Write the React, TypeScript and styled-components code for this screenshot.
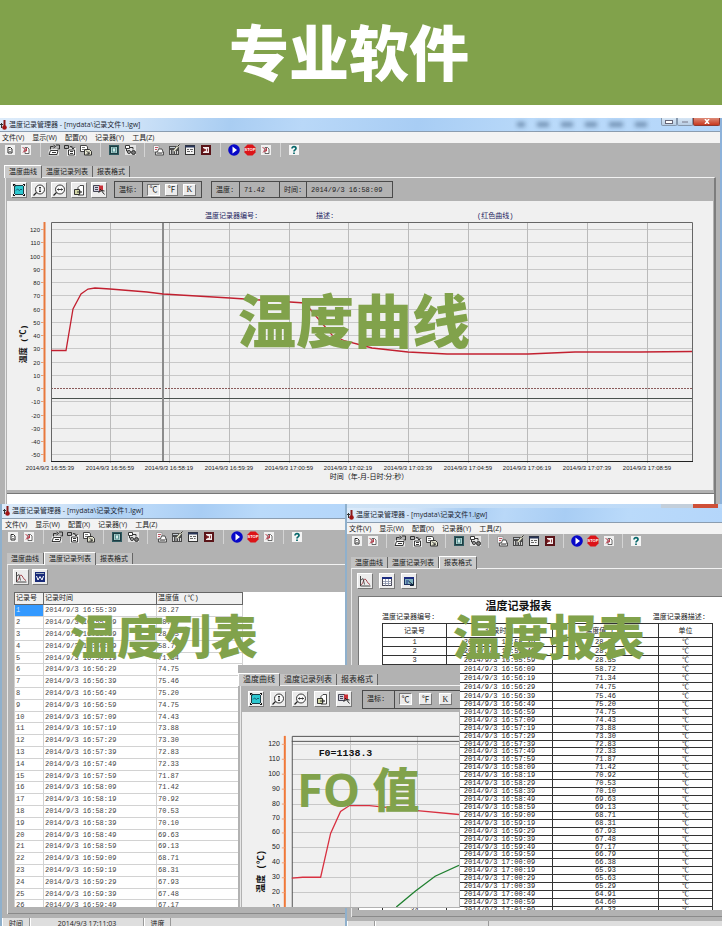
import React from "react";
import styled, { createGlobalStyle, css } from "styled-components";

const GREEN = "#81a24b";
const GREY = "#b2b2b2";
const SANS = `"Open Sans", "Noto Sans CJK SC", sans-serif`;
const SONG = `"Liberation Mono", "Noto Sans CJK SC", monospace`;

const GlobalStyle = createGlobalStyle`
  *, *::before, *::after { box-sizing: border-box; }
  body { margin: 0; background: #fff; color: #222; font-family: ${SANS}; font-size: 7px; line-height: 10px; }
  button { font: inherit; color: inherit; border: 0; padding: 0; margin: 0; background: none; }
  svg { display: block; }
`;

/* ---------- data ---------- */

const VALUES = [
  "28.27", "28.30", "28.35", "58.72", "71.34", "74.75", "75.46", "75.20", "74.75", "74.43", "73.88", "73.30",
  "72.83", "72.33", "71.87", "71.42", "70.92", "70.53", "70.10", "69.63", "69.13", "68.71", "68.31", "67.93",
  "67.48", "67.17", "66.79", "66.38", "65.93", "65.63", "65.29", "64.91", "64.60", "64.23",
];

const two = (n: number) => String(n).padStart(2, "0");

const RECORDS = VALUES.map((value, i) => {
  const s = 16 * 3600 + 55 * 60 + 39 + i * 10;
  return {
    id: i + 1,
    time: `2014/9/3 ${two(Math.floor(s / 3600))}:${two(Math.floor(s / 60) % 60)}:${two(s % 60)}`,
    value,
  };
});

const MENUS = ["文件(V)", "显示(W)", "配置(X)", "记录器(Y)", "工具(Z)"];
const TABS = ["温度曲线", "温度记录列表", "报表格式"];

/* ---------- page ---------- */

const Page = styled.main`
  overflow: hidden;
`;

const Banner = styled.header`
  display: flex;
  justify-content: center;
  align-items: center;
  height: 105px;
  padding-right: 24px;
  padding-bottom: 6px;
  margin-bottom: 13px;
  background: ${GREEN};
`;

const BannerTitle = styled.h1`
  margin: 0;
  color: #fff;
  font: 900 60px/60px "Noto Sans CJK SC", sans-serif;
`;

const Lower = styled.div`
  position: relative;
  display: grid;
  grid-template-columns: 345fr 377fr;
`;

const Caption = styled.h2<{ $x: number; $y: number; $size: number }>`
  position: absolute;
  left: ${(p) => p.$x}px;
  top: ${(p) => p.$y}px;
  margin: 0;
  color: ${GREEN};
  font: 900 ${(p) => p.$size}px/1 "Noto Sans CJK SC", sans-serif;
  white-space: nowrap;
  pointer-events: none;
`;

const CaptionLatin = styled.span`
  font-family: "Open Sans", sans-serif;
  font-weight: 700;
`;

/* ---------- window frame ---------- */

const Frame = styled.section<{ $edge: "left" | "right" }>`
  position: relative;
  display: flex;
  flex-direction: column;
  min-width: 0;
  background: ${GREY};
  ${(p) => (p.$edge === "left" ? "border-left: 2px solid #8fb0cc;" : "border-right: 2px solid #8db2da;")}
`;

const TitleBar = styled.div<{ $height: number; $indent: number }>`
  display: flex;
  align-items: center;
  gap: 2px;
  height: ${(p) => p.$height}px;
  padding-left: ${(p) => p.$indent}px;
  border-bottom: 1px solid #8b9db0;
  background: linear-gradient(100deg, #dcebfa 0, #cfe3f8 18%, #a9cdf2 32%, #b9d8f8 42%, #a8cdf4 58%, #badafa 75%, #b4d6fa 100%);
  color: #1c2733;
  white-space: nowrap;
`;

const UnderlyingStrip = styled.div`
  display: flex;
  justify-content: flex-end;
  height: 4px;
  padding-right: 4px;
  background: linear-gradient(90deg, #cfe3f6, #b9d8f8);
  &::before { content: ""; width: 32px; background: #c3cfdb; }
  &::after { content: ""; width: 25px; background: #cf5038; }
`;

const GhostMenu = styled.div`
  display: flex;
  gap: 12px;
  margin-left: auto;
  margin-right: 12px;
  filter: blur(2px);
`;

const Ghost = styled.i<{ $w: number }>`
  width: ${(p) => p.$w}px;
  height: 5px;
  background: #5f7d9f;
  opacity: 0.75;
`;

const WindowButtons = styled.div`
  display: flex;
  align-self: flex-start;
  height: 8px;
`;

const WindowButton = styled.button<{ $close?: boolean }>`
  display: grid;
  place-items: center;
  width: ${(p) => (p.$close ? 27 : 16)}px;
  border: 1px solid ${(p) => (p.$close ? "#8d3a30" : "#8698ad")};
  border-top: 0;
  border-radius: 0 0 2px 2px;
  background: ${(p) => (p.$close ? "linear-gradient(#dd8a78, #c8391f)" : "linear-gradient(#d7e6f5, #b9cee4)")};
`;

const MenuBar = styled.nav<{ $indent: number }>`
  display: flex;
  align-items: center;
  gap: 8px;
  height: 11px;
  padding-left: ${(p) => p.$indent}px;
  background: #f3f3f3;
  white-space: nowrap;
`;

const IconBar = styled.div<{ $indent: number }>`
  display: flex;
  align-items: center;
  height: 14px;
  padding-left: ${(p) => p.$indent}px;
`;

const IconGroup = styled.div`
  display: flex;
  gap: 4px;
`;

const Divider = styled.span<{ $w: number }>`
  display: flex;
  justify-content: center;
  flex: none;
  width: ${(p) => p.$w}px;
  height: 14px;
  &::before { content: ""; width: 1px; background: #d4d4d4; }
`;

const IconButton = styled.button`
  display: grid;
  place-items: center;
  flex: none;
  width: 12px;
  height: 12px;
`;

const TabRow = styled.div<{ $indent: number; $large?: boolean }>`
  display: flex;
  align-items: flex-end;
  height: 12px;
  margin-top: 8px;
  padding-left: ${(p) => p.$indent}px;
  font-family: ${SONG};
  font-size: ${(p) => (p.$large ? 8 : 7)}px;
`;

const Tab = styled.button<{ $active: boolean }>`
  height: 11px;
  padding: 0 4px;
  border-right: 1px solid #666;
  background: #c2c2c2;
  white-space: nowrap;
  ${(p) =>
    p.$active &&
    css`
      height: 13px;
      margin-bottom: -1px;
      border-top: 1px solid #fff;
      border-left: 1px solid #fff;
      background: #cacaca;
      z-index: 1;
    `}
`;

const Panel = styled.div<{ $left: number; $right: number }>`
  display: flex;
  flex-direction: column;
  flex: 1;
  min-width: 0;
  margin-left: ${(p) => p.$left}px;
  margin-right: ${(p) => p.$right}px;
  border-top: 1px solid #f2f2f2;
  border-left: 1px solid #e8e8e8;
  ${(p) => p.$right > 0 && "border-right: 2px solid #7d7d7d;"}
`;

const Tools = styled.div<{ $gap: number; $indent: number; $height: number }>`
  display: flex;
  align-items: center;
  gap: ${(p) => p.$gap}px;
  height: ${(p) => p.$height}px;
  padding-left: ${(p) => p.$indent}px;
  font-family: ${SONG};
  white-space: nowrap;
`;

const ToolButton = styled.button`
  display: grid;
  place-items: center;
  flex: none;
  width: 16px;
  height: 16px;
  border: 1px solid #fff;
  border-right-color: #777;
  border-bottom-color: #777;
  background: #ececec;
`;

const Readout = styled.div<{ $ml: number; $large?: boolean }>`
  display: flex;
  flex: none;
  height: ${(p) => (p.$large ? 19 : 17)}px;
  margin-left: ${(p) => p.$ml}px;
  border: 1px solid #4a4a4a;
`;

const Cell = styled.div<{ $w: number; $gap?: number }>`
  display: flex;
  align-items: center;
  gap: ${(p) => p.$gap ?? 5}px;
  width: ${(p) => p.$w}px;
  padding-left: 4px;
  & + & { border-left: 1px solid #4a4a4a; }
`;

const UnitButton = styled.button<{ $on?: boolean }>`
  flex: none;
  width: 13px;
  height: 12px;
  border: 1px solid ${(p) => (p.$on ? "#777" : "#fff")};
  border-right-color: ${(p) => (p.$on ? "#fff" : "#777")};
  border-bottom-color: ${(p) => (p.$on ? "#fff" : "#777")};
  background: #ececec;
  font-family: "Liberation Serif", "Noto Sans CJK SC", serif;
  font-size: 8px;
  line-height: 9px;
`;

/* ---------- content areas ---------- */

const ChartArea = styled.div`
  margin: 0 1px;
  background: #f0f0f0;
`;

const ChartSvg = styled.svg`
  width: 100%;
  height: auto;
`;

const BlankStrip = styled.div`
  height: 11px;
  margin: 3px 0 0 1px;
  border-top: 1px solid #777;
  background: #fff;
`;

const ListArea = styled.div`
  height: 315px;
  margin: 4px 0 0 6px;
  overflow: hidden;
  background: #fff;
`;

const ListTable = styled.table`
  width: 228px;
  border-collapse: collapse;
  table-layout: fixed;
  font-family: ${SONG};
  line-height: 9px;
  color: #444;
  th, td { padding: 0 1px; text-align: left; font-weight: 400; white-space: nowrap; }
  th { height: 12px; background: #f0f0f0; border: 1px solid #666; color: #222; }
  td { height: 12px; border: 1px solid #d2d2d2; }
  tr:nth-child(5n) td { height: 11px; }
  tbody tr:first-child td:first-child { background: #3399ff; color: #cfe6ff; }
`;

const PanelFoot = styled.div`
  height: 7px;
  border-bottom: 1px solid #8a8a8a;
`;

const StatusBar = styled.footer<{ $height: number }>`
  display: flex;
  height: ${(p) => p.$height}px;
  margin-top: 4px;
  overflow: hidden;
  background: #dedede;
  line-height: 12px;
`;

const StatusCell = styled.div<{ $w: number }>`
  flex: none;
  width: ${(p) => p.$w}px;
  border-left: 1px solid #fff;
  border-right: 1px solid #999;
  text-align: center;
`;

const Paper = styled.div`
  height: 314px;
  margin: 4px 0 0 6px;
  padding: 2px 11px 0 23px;
  overflow: hidden;
  border-top: 1px solid #777;
  border-left: 1px solid #777;
  background: #fff;
  font-family: ${SONG};
`;

const ReportTitle = styled.h3`
  margin: 0 56px 1px 0;
  font: 700 11px/12px "Noto Sans CJK SC", sans-serif;
  color: #111;
  text-align: center;
`;

const ReportMeta = styled.div`
  display: flex;
  justify-content: space-between;
  padding-right: 5px;
  line-height: 11px;
`;

const ReportTable = styled.table`
  width: 100%;
  border-collapse: collapse;
  table-layout: fixed;
  color: #222;
  th, td { padding: 0; font-weight: 400; text-align: center; border: 1px solid #333; white-space: nowrap; overflow: hidden; }
  th { height: 14px; line-height: 12px; }
  td { height: 8px; line-height: 7px; }
  tr:nth-child(-n + 7) td { height: 9px; line-height: 8px; }
  tr:nth-child(13n) td { height: 7px; line-height: 6px; }
`;

const FoWindow = styled.section`
  position: absolute;
  left: 238px;
  top: 161px;
  width: 222px;
  height: 243px;
  overflow: hidden;
  background: ${GREY};
`;

const FoPanel = styled.div`
  margin-left: 2px;
  border-top: 1px solid #f2f2f2;
  border-left: 1px solid #e8e8e8;
`;

/* ---------- icons ---------- */

const icons: Record<string, React.ReactNode> = {
  page: (
    <>
      <rect x="1" y="1" width="10" height="10" fill="#f0f0f0" />
      <path d="M4 3.500h2.500l1.500 1.500v4h-4z" fill="#fff" stroke="#2a2a2a" />
      <path d="M5 5.500h1.500M5 7.500h2" stroke="#555" strokeWidth=".7" />
    </>
  ),
  pageRed: (
    <>
      <rect x="1" y="1" width="10" height="10" fill="#f0f0f0" />
      <path d="M5 3.500h2.500l1.500 1.500v4.500h-4z" fill="#fff" stroke="#444" strokeWidth=".8" />
      <path d="M2.500 3l3.500 3.500M6.500 4v3h-3M3 8.500l2-2" stroke="#b82838" strokeWidth=".9" fill="none" />
    </>
  ),
  open: (
    <>
      <path d="M1.500 5h9.500v6.500h-10.500v-4z" fill="#e8e8e8" />
      <path d="M1 10.500l1.500-4h7.500l-1 4zM4 8.500h4" fill="#fff" stroke="#222" strokeWidth=".9" />
      <path d="M2.500 5.500v-3h3M5.500 1l2 1.500-2 1.500M8 1h3.500v4h-2" stroke="#222" strokeWidth=".9" fill="none" />
    </>
  ),
  save: (
    <>
      <rect x="3" y="4" width="9" height="8" fill="#e8e8e8" />
      <path d="M4.500 11v-5h6v5zM6 7.500h3M6 9.500h3" fill="#fff" stroke="#222" strokeWidth=".9" />
      <path d="M.500 1.500h4v3h-4zM6 2.500c2 0 3 0 3 2M7.500 3.500l1.500 1.500 1.500-1.500" stroke="#222" strokeWidth=".9" fill="none" />
    </>
  ),
  copy: (
    <>
      <path d="M.500 1.500h6l1 1.500v4.500h-7z" fill="#fff" stroke="#333" strokeWidth=".9" />
      <path d="M2 3.500h3M2 5.500h2" stroke="#555" strokeWidth=".8" />
      <path d="M4.500 5.500h5l2 2v3.500h-7z" fill="#e9e9d4" stroke="#222" strokeWidth=".9" />
      <path d="M6 6.500l3.500 3.500M9 7.500v2.500h-2.500" stroke="#222" strokeWidth=".9" fill="none" />
    </>
  ),
  chip: (
    <>
      <rect x="1" y="1" width="10" height="10" fill="#2f5a60" />
      <rect x="2.500" y="2.500" width="7" height="7" fill="#a8d0cc" stroke="#1c3c42" />
      <rect x="4.500" y="4" width="3" height="4" fill="#d4ecea" stroke="#4b8488" strokeWidth=".8" />
    </>
  ),
  nodes: (
    <>
      <rect x="1" y="1" width="11" height="10" fill="#e4e4e4" />
      <path d="M1.500 1.500h4v3h-4z" fill="#fff" stroke="#222" strokeWidth=".9" />
      <path d="M6 3.500h3v2M2.500 5v2h2" stroke="#222" strokeWidth=".9" fill="none" />
      <circle cx="5" cy="8" r="1.500" fill="#bbb" stroke="#222" strokeWidth=".9" />
      <circle cx="9.500" cy="8.500" r="2" fill="#777" stroke="#222" strokeWidth=".9" />
    </>
  ),
  printDoc: (
    <>
      <path d="M1.500 1.500h5.500v6.500h-5.500z" fill="#f4f4f4" stroke="#999" strokeWidth=".9" />
      <path d="M3 3.500h3M3 5.500h2" stroke="#b84050" strokeWidth=".9" />
      <path d="M3.500 11v-3h8v3z" fill="#e0e0e0" stroke="#444" strokeWidth=".9" />
      <path d="M5.500 8l1-3h3.500l1 3" fill="#fff" stroke="#444" strokeWidth=".9" />
      <path d="M5 9.500h5" stroke="#666" strokeWidth=".7" />
    </>
  ),
  setup: (
    <>
      <rect x="1" y="2" width="10" height="9" fill="#4a4a4a" />
      <path d="M2.500 6v4M5 6v4M7.500 7v3M9.500 7v3" stroke="#d4d4d4" />
      <path d="M2 3.500h5" stroke="#c4ccd4" />
      <path d="M11 1l-5 6" stroke="#e8e8d0" strokeWidth="1.500" />
      <path d="M11.500 .500l-2 2" stroke="#222" />
    </>
  ),
  form: (
    <>
      <rect x="1.500" y="1.500" width="9" height="9" fill="#f4f4f4" stroke="#333" />
      <path d="M1 2.500h10" stroke="#2a3658" strokeWidth="2" />
      <path d="M3 5.500h2M6 5.500h3M3 7.500h3M7 7.500h1.500" stroke="#555" strokeWidth=".9" />
    </>
  ),
  record: (
    <>
      <rect x="1" y="1" width="10" height="10" fill="#5a1418" />
      <rect x="3" y="3" width="6" height="6" fill="#f4eaea" />
      <path d="M3 4.500l3 1.500-3 1.500zM7.500 4.500v3" stroke="#7a181c" fill="#7a181c" strokeWidth=".8" />
    </>
  ),
  play: (
    <>
      <circle cx="6" cy="6" r="5.800" fill="#0808c8" />
      <path d="M4.500 2.500l4.500 3.500-4.500 3.500z" fill="#fff" />
    </>
  ),
  stop: (
    <>
      <path d="M3.500 .500h5l3 3v5l-3 3h-5l-3-3v-5z" fill="#dc1418" />
      <text x="6" y="7" fontSize="4" fontWeight="700" fill="#fff" textAnchor="middle" fontFamily="Liberation Sans, sans-serif">
        STOP
      </text>
    </>
  ),
  help: (
    <>
      <rect width="10" height="10" x="1" y="1" fill="#f4f4f4" />
      <path d="M4 4.500c0-2.500 4-2.500 4 0 0 1.500-2 1.200-2 3M6 8.500v1.500" fill="none" stroke="#06676a" strokeWidth="1.700" />
    </>
  ),
  fit: (
    <>
      <rect x="2" y="2" width="8" height="8" fill="#2cc8d0" />
      <path d="M2 1.500h8M2 10.500h8M1.500 2v8M10.500 2v8" stroke="#1a4048" />
      <path d="M0 .500h2v2M12 .500h-2M0 11.500h2M12 11.500h-2M.500 0v2M11.500 0v2M.500 10v2M11.500 10v2" stroke="#111" fill="none" />
      <path d="M3 6.500l1.500-1.500 2 1.500 1.500-1.500 1 1" fill="none" stroke="#15506a" strokeWidth=".9" />
    </>
  ),
  zoomY: (
    <>
      <circle cx="7" cy="5.500" r="4.500" fill="#fafafa" stroke="#222" strokeWidth=".9" />
      <path d="M3.500 8.500l-3 3" stroke="#222" strokeWidth="1.300" />
      <path d="M7 3v5M6 4l1-1 1 1M6 7l1 1 1-1" fill="none" stroke="#222" strokeWidth=".9" />
    </>
  ),
  zoomX: (
    <>
      <circle cx="7" cy="5.500" r="4.500" fill="#fafafa" stroke="#222" strokeWidth=".9" />
      <path d="M3.500 8.500l-3 3" stroke="#222" strokeWidth="1.300" />
      <path d="M4.500 5.500h5M5.500 4.500l-1 1 1 1M8.500 4.500l1 1-1 1" fill="none" stroke="#222" strokeWidth=".9" />
    </>
  ),
  paste: (
    <>
      <path d="M5 3.500l2-2h3.500v9.500h-5.500z" fill="#fff" stroke="#333" strokeWidth=".9" />
      <path d="M1.500 5.500h5v5h-5z" fill="#d4d8a8" stroke="#222" strokeWidth=".9" />
      <path d="M4 8h4.500M7 6.500l1.500 1.500-1.500 1.500" fill="none" stroke="#222" strokeWidth=".9" />
    </>
  ),
  annotate: (
    <>
      <path d="M.500 1.500h6v6h-6z" fill="#cfd0dc" stroke="#334" strokeWidth=".9" />
      <path d="M2 3.500h3M2 5.500h3" stroke="#334" strokeWidth=".9" />
      <path d="M6 1.500h4v5h-4z" fill="#c83038" />
      <path d="M7 5l4.500 5.500M5.500 8.500l3-2 3 .500" fill="none" stroke="#222" />
    </>
  ),
  curve: (
    <>
      <path d="M1.500 1v10h10" fill="none" stroke="#333" strokeWidth=".9" />
      <path d="M2 10c2-1 2.500-6 4-6s2.500 5 5 5.500" fill="none" stroke="#98303a" strokeWidth=".9" />
      <path d="M2 5l2-1.500 1.500 6" stroke="#333" strokeWidth=".8" fill="none" />
    </>
  ),
  word: (
    <>
      <rect x="1" y="1" width="10" height="10" fill="#182a78" />
      <path d="M2.500 5l1.500 4 2-3.500 2 3.500 1.500-4" fill="none" stroke="#fff" />
      <path d="M2 2.500h8" stroke="#9ab" />
    </>
  ),
  grid: (
    <>
      <rect x="1.500" y="2.500" width="9" height="8" fill="#fff" stroke="#334" strokeWidth=".9" />
      <path d="M1 3h10" stroke="#1b2c80" strokeWidth="2" />
      <path d="M4.500 4v6.500M7.500 4v6.500M2 6.500h8.500M2 8.500h8.500" stroke="#8890a8" strokeWidth=".8" />
    </>
  ),
  export: (
    <>
      <rect x="1.500" y="2.500" width="9" height="7" fill="#7fb0bc" stroke="#1c2f60" />
      <path d="M1 3h10" stroke="#1b2c80" strokeWidth="2" />
      <path d="M3 6h3M3 8h2" stroke="#1b2c80" />
      <path d="M6 6.500l4 3.500M10.500 7v3.500h-3.500" fill="none" stroke="#123" />
    </>
  ),
};

const Icon = ({ name }: { name: string }) => (
  <svg width="12" height="12" viewBox="0 0 12 12" aria-hidden="true">
    {icons[name]}
  </svg>
);

const AppIcon = () => (
  <svg width="7" height="10" viewBox="0 0 7 10" aria-hidden="true">
    <path d="M0 4.500h3M1.500 3v5" stroke="#333" />
    <path d="M4.500 0v6" stroke="#8a1818" strokeWidth="2" />
    <circle cx="4.500" cy="7.500" r="2.300" fill="#a01414" />
  </svg>
);

/* ---------- composed parts ---------- */

const ICON_GROUPS = [
  ["page", "pageRed"],
  ["open", "save", "copy"],
  ["chip", "nodes"],
  ["printDoc", "setup", "form", "record"],
  ["play", "stop", "pageRed"],
  ["help"],
];

type ChromeProps = { titleHeight: number; indent: number; divider: number; children?: React.ReactNode };

const WindowChrome = ({ titleHeight, indent, divider, children }: ChromeProps) => (
  <>
    <TitleBar $height={titleHeight} $indent={indent - 3}>
      <AppIcon />
      <span>温度记录管理器 - [mydata\记录文件1.lgw]</span>
      {children}
    </TitleBar>
    <MenuBar $indent={indent - 1}>
      {MENUS.map((m) => (
        <button key={m}>{m}</button>
      ))}
    </MenuBar>
    <IconBar $indent={indent + 1}>
      {ICON_GROUPS.map((group, g) => (
        <React.Fragment key={g}>
          {g > 0 && <Divider $w={divider} />}
          <IconGroup>
            {group.map((name) => (
              <IconButton key={name} aria-label={name}>
                <Icon name={name} />
              </IconButton>
            ))}
          </IconGroup>
        </React.Fragment>
      ))}
    </IconBar>
  </>
);

const Tabs = ({ active, indent, large }: { active: number; indent: number; large?: boolean }) => (
  <TabRow $indent={indent} $large={large} role="tablist">
    {TABS.map((t, i) => (
      <Tab key={t} role="tab" aria-selected={i === active} $active={i === active}>
        {t}
      </Tab>
    ))}
  </TabRow>
);

const ToolButtons = ({ names }: { names: string[] }) => (
  <>
    {names.map((n) => (
      <ToolButton key={n} aria-label={n}>
        <Icon name={n} />
      </ToolButton>
    ))}
  </>
);

const UnitBox = ({ ml, large }: { ml: number; large?: boolean }) => (
  <Readout $ml={ml} $large={large}>
    <Cell $w={large ? 31 : 27}>温标:</Cell>
    <Cell $w={large ? 72 : 59} $gap={large ? 7 : 5}>
      <UnitButton $on>℃</UnitButton>
      <UnitButton>℉</UnitButton>
      <UnitButton>K</UnitButton>
    </Cell>
  </Readout>
);

const CHART_TOOLS = ["fit", "zoomY", "zoomX", "paste", "annotate"];
const AXIS_FONT = "Liberation Sans, sans-serif";
const CJK_FONT = "Liberation Mono, Noto Sans CJK SC, sans-serif";

const TIMES = [
  "16:55:39", "16:56:59", "16:58:19", "16:59:39", "17:00:59", "17:02:19",
  "17:03:39", "17:04:59", "17:06:19", "17:07:39", "17:08:59",
];

const CurveChart = () => {
  const y = (v: number) => Math.round(187 - v * 1.325);
  const x = (i: number) => Math.round(44 + i * 59.65);
  const ticks = Array.from({ length: 18 }, (_, i) => 120 - i * 10);
  return (
    <ChartSvg viewBox="0 0 706 289" role="img" aria-label="温度曲线">
      <g fontFamily={CJK_FONT} fontSize="7" fill="#1c1c60">
        <text x="198" y="17">温度记录器编号:</text>
        <text x="309" y="17">描述:</text>
        <text x="470" y="17">(红色曲线)</text>
      </g>
      <g shapeRendering="crispEdges" stroke="#c8c8c8">
        {ticks.filter((v) => v !== 0).map((v) => (
          <path key={v} d={`M44 ${y(v)}.5H685`} />
        ))}
        {TIMES.slice(1).map((t, i) => (
          <path key={t} d={`M${x(i + 1) - 1}.5 21V262`} stroke="#bababa" />
        ))}
      </g>
      <path d="M44 187.500H685" stroke="#8a5a5a" strokeDasharray="2 1" />
      <path d="M44 197.500H685" stroke="#4a524e" />
      <path d="M156 21V260" stroke="#8c8c8c" strokeWidth="2" />
      <path d="M44.500 260V21.500H685.500V260" fill="none" stroke="#666" />
      <path d="M44 260.500H686" stroke="#222" />
      <path d="M37.500 21V261" stroke="#e8783c" strokeWidth="2" />
      <g stroke="#e8a078">
        {ticks.map((v) => (
          <path key={v} d={`M34 ${y(v)}.5h3`} />
        ))}
      </g>
      <path
        d="M44 149.500H59L66 108L74 93L81 88L88 87L103 88L140 91L156 93L223 97L253 99L298 102L308 114L325 134L338 140L354 144L365 147L383 149L401 151L440 153H521L568 151L633 151L685 150.500"
        fill="none"
        stroke="#c22030"
        strokeWidth="1.300"
      />
      <g fontFamily={AXIS_FONT} fontSize="6" fill="#222">
        {ticks.map((v) => (
          <text key={v} x="33" y={y(v) + 3} textAnchor="end">{v}</text>
        ))}
        {TIMES.map((t, i) => (
          <text key={t} x={x(i) - 1} y="269" textAnchor="middle">{`2014/9/3 ${t}`}</text>
        ))}
      </g>
      <text x="362" y="278" textAnchor="middle" fontFamily={AXIS_FONT + ", Noto Sans CJK SC"} fontSize="7" fill="#111">时间（年-月-日时:分:秒）</text>
      <text transform="translate(19 143) rotate(-90)" textAnchor="middle" fontFamily={CJK_FONT} fontSize="8" fontWeight="700" fill="#111">
        温度 (℃)
      </text>
    </ChartSvg>
  );
};

const FoChart = () => {
  const y = (v: number) => Math.round(32 + (120 - v) * 1.49);
  const ticks = Array.from({ length: 12 }, (_, i) => 120 - i * 10);
  return (
    <ChartSvg viewBox="0 0 218 196" role="img" aria-label="FO 值">
      <g shapeRendering="crispEdges" stroke="#c8c8c8">
        {ticks.map((v) => (
          <path key={v} d={`M50 ${y(v)}.5H218`} />
        ))}
        <path d="M108.500 24V196M176.500 24V196" />
      </g>
      <path d="M50.500 196V24.500H218" fill="none" stroke="#555" />
      <path d="M50 29.500H218" stroke="#555" />
      <path d="M43 24V196" stroke="#f07838" strokeWidth="2" />
      <g stroke="#f0a078">
        {ticks.map((v) => (
          <path key={v} d={`M40 ${y(v)}.5h3`} />
        ))}
      </g>
      <path d="M50 167L61 166H79L89 122L99 100L108 94H128L148 96L176 99L218 103" fill="none" stroke="#d83040" strokeWidth="1.300" />
      <path d="M155 196L174 180L194 165L218 154" fill="none" stroke="#208030" strokeWidth="1.300" />
      <g fontFamily={AXIS_FONT} fontSize="7" fill="#222">
        {ticks.map((v) => (
          <text key={v} x="38" y={y(v) + 2} textAnchor="end">{v}</text>
        ))}
      </g>
      <text x="77" y="44" fontFamily="Liberation Mono, monospace" fontSize="10" fontWeight="700" fill="#111">F0=1138.3</text>
      <text transform="translate(22 160) rotate(-90)" textAnchor="middle" fontFamily={CJK_FONT} fontSize="9" fontWeight="700" fill="#111">
        温度 (℃)
      </text>
    </ChartSvg>
  );
};

/* ---------- screens ---------- */

const CurveWindow = () => (
  <Frame $edge="right">
    <WindowChrome titleHeight={14} indent={3} divider={16}>
      <GhostMenu aria-hidden="true">
        <Ghost $w={8} />
        <Ghost $w={12} />
        <Ghost $w={12} />
        <Ghost $w={12} />
        <Ghost $w={14} />
        <Ghost $w={12} />
      </GhostMenu>
      <WindowButtons>
        <WindowButton aria-label="最小化">
          <svg width="8" height="4"><rect x=".5" y=".5" width="7" height="3" fill="#fff" stroke="#667" /></svg>
        </WindowButton>
        <WindowButton aria-label="最大化">
          <svg width="8" height="4"><path d="M1 2h6" stroke="#778" /></svg>
        </WindowButton>
        <WindowButton $close aria-label="关闭">
          <svg width="6" height="5"><path d="M1 0l4 5M5 0l-4 5" stroke="#fff" strokeWidth="1.500" /></svg>
        </WindowButton>
      </WindowButtons>
    </WindowChrome>
    <Tabs active={0} indent={4} />
    <Panel $left={5} $right={4}>
      <Tools $gap={4} $indent={5} $height={23}>
        <ToolButtons names={CHART_TOOLS} />
        <UnitBox ml={3} />
        <Readout $ml={5}>
          <Cell $w={27}>温度:</Cell>
          <Cell $w={40}>71.42</Cell>
          <Cell $w={27}>时间:</Cell>
          <Cell $w={86}>2014/9/3 16:58:09</Cell>
        </Readout>
      </Tools>
      <ChartArea>
        <CurveChart />
      </ChartArea>
      <BlankStrip />
    </Panel>
    <Caption $x={238} $y={171} $size={58}>温度曲线</Caption>
  </Frame>
);

const ListWindow = () => (
  <Frame $edge="left">
    <WindowChrome titleHeight={15} indent={4} divider={16} />
    <Tabs active={1} indent={5} />
    <Panel $left={5} $right={0}>
      <Tools $gap={3} $indent={5} $height={23}>
        <ToolButtons names={["curve", "word"]} />
      </Tools>
      <ListArea>
        <ListTable>
          <colgroup>
            <col width="29" />
            <col width="113" />
            <col width="86" />
          </colgroup>
          <thead>
            <tr>
              <th>记录号</th>
              <th>记录时间</th>
              <th>温度值 (℃)</th>
            </tr>
          </thead>
          <tbody>
            {RECORDS.slice(0, 26).map((r) => (
              <tr key={r.id}>
                <td>{r.id}</td>
                <td>{r.time}</td>
                <td>{r.value}</td>
              </tr>
            ))}
          </tbody>
        </ListTable>
      </ListArea>
      <PanelFoot />
    </Panel>
    <StatusBar $height={8}>
      <StatusCell $w={28}>时间</StatusCell>
      <StatusCell $w={114}>2014/9/3 17:11:03</StatusCell>
      <StatusCell $w={27}>进度</StatusCell>
    </StatusBar>
    <Caption $x={68} $y={106} $size={47}>温度列表</Caption>
  </Frame>
);

const ReportWindow = () => (
  <Frame $edge="left">
    <UnderlyingStrip />
    <WindowChrome titleHeight={15} indent={3} divider={15} />
    <Tabs active={2} indent={4} />
    <Panel $left={4} $right={0}>
      <Tools $gap={6} $indent={5} $height={23}>
        <ToolButtons names={["curve", "grid", "export"]} />
      </Tools>
      <Paper>
        <ReportTitle>温度记录报表</ReportTitle>
        <ReportMeta>
          <span>温度记录器编号:</span>
          <span>温度记录器描述:</span>
        </ReportMeta>
        <ReportTable>
          <colgroup>
            <col width="64" />
            <col width="106" />
            <col width="106" />
            <col width="54" />
          </colgroup>
          <thead>
            <tr>
              <th>记录号</th>
              <th>记录时间</th>
              <th>温度值 (℃)</th>
              <th>单位</th>
            </tr>
          </thead>
          <tbody>
            {RECORDS.map((r) => (
              <tr key={r.id}>
                <td>{r.id}</td>
                <td>{r.time}</td>
                <td>{r.value}</td>
                <td>℃</td>
              </tr>
            ))}
          </tbody>
        </ReportTable>
      </Paper>
      <PanelFoot />
    </Panel>
    <StatusBar $height={5}>
      <StatusCell $w={28} />
      <StatusCell $w={114} />
    </StatusBar>
    <Caption $x={106} $y={106} $size={48}>温度报表</Caption>
  </Frame>
);

export default function App() {
  return (
    <>
      <GlobalStyle />
      <Page>
        <Banner>
          <BannerTitle>专业软件</BannerTitle>
        </Banner>
        <CurveWindow />
        <Lower>
          <ListWindow />
          <ReportWindow />
          <FoWindow>
            <Tabs active={0} indent={0} large />
            <FoPanel>
              <Tools $gap={6} $indent={7} $height={26}>
                <ToolButtons names={CHART_TOOLS} />
                <UnitBox ml={4} large />
              </Tools>
              <ChartArea>
                <FoChart />
              </ChartArea>
            </FoPanel>
            <Caption $x={59} $y={98} $size={47}>
              <CaptionLatin>FO </CaptionLatin>值
            </Caption>
          </FoWindow>
        </Lower>
      </Page>
    </>
  );
}
